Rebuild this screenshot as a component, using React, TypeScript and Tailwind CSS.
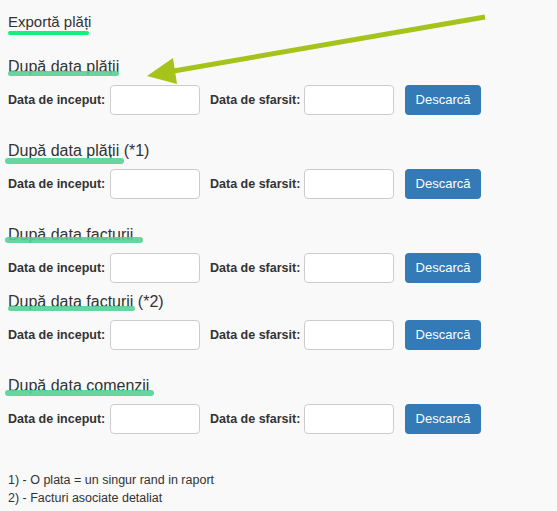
import React from 'react';

type Section = {
  title: string;
  note?: string;
  mark: { left: number; width: number; top: number; height: number };
  className: string;
};

const sections: Section[] = [
  { title: 'După data plății', mark: { left: 8, width: 111, top: 14, height: 5 }, className: 'mt-[26px]' },
  { title: 'După data plății', note: ' (*1)', mark: { left: 5, width: 119, top: 17, height: 6 }, className: 'mt-[26px]' },
  { title: 'După data facturii', mark: { left: 5, width: 138, top: 12, height: 6 }, className: 'mt-[26px]' },
  { title: 'După data facturii', note: ' (*2)', mark: { left: 8, width: 127, top: 14, height: 5 }, className: 'mt-[9px]' },
  { title: 'După data comenzii', mark: { left: 5, width: 149, top: 14, height: 6 }, className: 'mt-[26px]' },
];

function DateRow() {
  return (
    <div className="mt-2 flex h-[30px] items-center">
      <label className="w-[110px] pl-2 text-[12.5px] font-bold text-[#333]">Data de inceput:</label>
      <input type="text" className="h-[30px] w-[90px] rounded border border-[#ccc] bg-white outline-none" />
      <label className="ml-[10px] w-[94px] text-[12.5px] font-bold text-[#333]">Data de sfarsit:</label>
      <input type="text" className="h-[30px] w-[90px] rounded border border-[#ccc] bg-white outline-none" />
      <button className="ml-[11px] h-[30px] w-[76px] rounded bg-[#337ab7] text-[13px] text-white">
        Descarcă
      </button>
    </div>
  );
}

export default function App() {
  return (
    <div className="relative min-h-[511px] w-[557px] overflow-hidden bg-[#f9f9f9] font-['Liberation_Sans',Arial,sans-serif] text-[#333]">
      <div className="flex flex-col pt-[13px]">
        {/* Title */}
        <div className="relative pl-2 text-[15px] leading-[18px]">
          Exportă plăți
          <span className="absolute left-2 top-[18px] h-[4px] w-[81px] rounded-full bg-[#17ef7b]" />
        </div>

        {sections.map((s, i) => (
          <div key={i} className={s.className}>
            <div className="relative pl-2 text-[16px] leading-[20px]">
              {s.title}
              {s.note}
              <span
                className="absolute rounded-full bg-[#55d095]/90"
                style={{ left: s.mark.left, width: s.mark.width, top: s.mark.top, height: s.mark.height }}
              />
            </div>
            <DateRow />
          </div>
        ))}

        {/* Notes */}
        <div className="mt-[37px] pl-2 text-[12.5px] leading-[18px]">
          <div>1) - O plata = un singur rand in raport</div>
          <div>2) - Facturi asociate detaliat</div>
        </div>
      </div>

      {/* Annotation arrow */}
      <svg className="pointer-events-none absolute left-0 top-0" width="557" height="511">
        <line x1="485" y1="17" x2="168" y2="72" stroke="#a6c31c" strokeWidth="5" />
        <polygon points="147,76 173,58 177,84" fill="#a6c31c" />
      </svg>
    </div>
  );
}
